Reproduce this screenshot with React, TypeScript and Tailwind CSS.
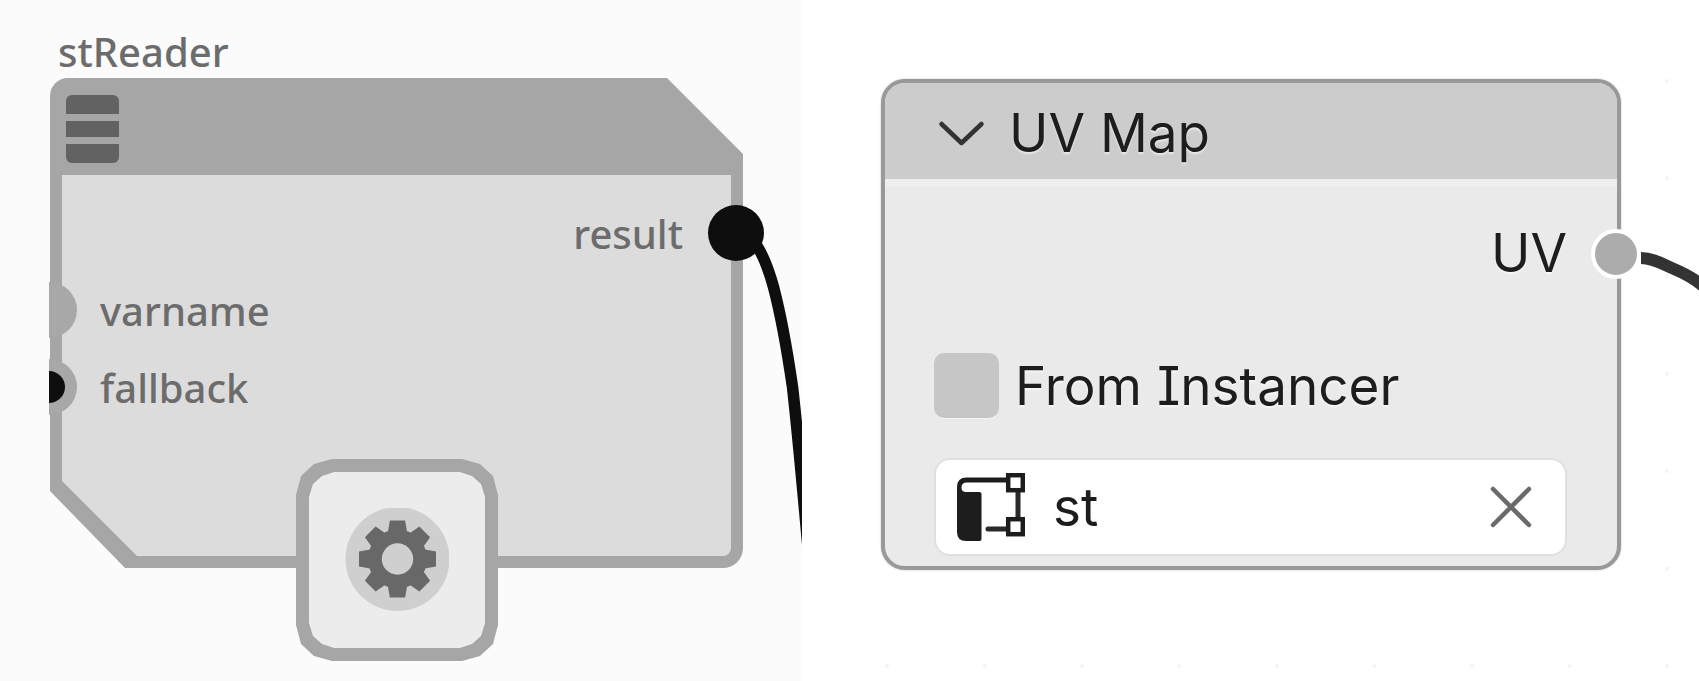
import React, { useState } from "react";

const SETTINGS_TEETH = [0, 45, 90, 135, 180, 225, 270, 315];
const GRID_STEP = 97.5;
const BOTTOM_DOTS = [0, 1, 2, 3, 4, 5, 6, 7, 8];
const SIDE_DOTS = [1, 2, 3, 4, 5, 6];

function GearIcon() {
  return (
    <svg viewBox="-52.500 -51 104 104" className="size-[104px]" aria-hidden="true">
      <circle r="52" fill="#cfcfcf" />
      <g fill="#686868">
        <circle r="29.500" />
        {SETTINGS_TEETH.map((angle) => (
          <path key={angle} d="M-7.6 -38.5H7.6L9.8 -26H-9.8Z" transform={`rotate(${angle})`} />
        ))}
      </g>
      <circle r="15.7" fill="#cfcfcf" />
    </svg>
  );
}

function UvMapIcon() {
  return (
    <svg viewBox="0 0 68 68" className="size-[68px] shrink-0" fill="none" aria-hidden="true">
      <path d="M0 14Q0 4.5 9.5 4.5H49V9.5H10Q4.500 9.500 4.500 14.500Q4.500 19 9 19H22.500Q24.500 19 24.500 21V66Q24.500 68 22.500 68H9Q0 68 0 59Z" fill="#1d1d1d" />
      <path d="M61 17V46M31 56H51" stroke="#2a2a2a" strokeWidth="5" strokeLinecap="round" />
      <rect x="51.200" y="2.200" width="14.600" height="15" fill="#fff" stroke="#1d1d1d" strokeWidth="4.500" />
      <rect x="51.200" y="46.200" width="14.600" height="15" fill="#fff" stroke="#1d1d1d" strokeWidth="4.500" />
    </svg>
  );
}

function ReaderNode() {
  return (
    <article className="relative">
      <div className="ml-px rounded-tl-[18px] rounded-br-[20px] bg-[#a6a6a6] px-3 pb-3 [clip-path:polygon(0_0,calc(100%_-_76px)_0,100%_76px,100%_100%,75px_100%,0_413px)]">
        <header className="flex h-[97px] items-center pt-1">
          <button type="button" aria-label="Node menu" className="ml-1 flex w-[53px] flex-col gap-[7px]">
            <span className="h-[19px] rounded-t-md bg-[#626262]" />
            <span className="h-4 bg-[#626262]" />
            <span className="h-[19px] rounded-b-md bg-[#626262]" />
          </button>
        </header>
        <div className="flex flex-col gap-[29px] rounded-br-lg bg-[#dcdcdc] pt-[35px] pr-12 pb-36 pl-[38px] [clip-path:polygon(0_0,100%_0,100%_100%,75px_100%,0_306px)]">
          <p className="text-right">result</p>
          <p>varname</p>
          <p>fallback</p>
        </div>
      </div>

      <span className="absolute top-[127px] -right-[21px] size-14 rounded-full bg-[#0e0e0e]" />
      <span className="absolute top-[204px] left-0 h-14 w-7 rounded-r-full bg-[#a8a8a8]" />
      <span className="absolute top-[281px] left-0 flex h-14 w-7 items-center rounded-r-full bg-[#a8a8a8]">
        <span className="h-8 w-4 rounded-r-full bg-[#0e0e0e]" />
      </span>

      <button
        type="button"
        aria-label="Node settings"
        className="absolute -bottom-[93px] left-1/2 ml-px -translate-x-1/2 bg-[#a6a6a6] p-[13px] [clip-path:polygon(0_36px,5px_17px,18px_5px,36px_0,calc(100%_-_36px)_0,calc(100%_-_18px)_5px,calc(100%_-_5px)_17px,100%_36px,100%_calc(100%_-_36px),calc(100%_-_5px)_calc(100%_-_17px),calc(100%_-_18px)_calc(100%_-_5px),calc(100%_-_36px)_100%,36px_100%,18px_calc(100%_-_5px),5px_calc(100%_-_17px),0_calc(100%_-_36px))]"
      >
        <span className="flex size-44 items-center justify-center bg-[#ececec] [clip-path:polygon(0_25px,4px_12px,13px_4px,25px_0,calc(100%_-_25px)_0,calc(100%_-_13px)_4px,calc(100%_-_4px)_12px,100%_25px,100%_calc(100%_-_25px),calc(100%_-_4px)_calc(100%_-_12px),calc(100%_-_13px)_calc(100%_-_4px),calc(100%_-_25px)_100%,25px_100%,13px_calc(100%_-_4px),4px_calc(100%_-_12px),0_calc(100%_-_25px))]">
          <GearIcon />
        </span>
      </button>
    </article>
  );
}

function UvMapNode() {
  const [open, setOpen] = useState(true);
  const [instancer, setInstancer] = useState(false);
  const [name, setName] = useState("st");

  return (
    <article className="relative rounded-3xl border-4 border-[#999999] bg-[#eaeaea] shadow-[0_0_2px_#bbbbbb]">
      <header className="flex h-24 items-center gap-[23px] rounded-t-[20px] bg-[#cccccc] pt-1 pl-[53px]">
        <button type="button" aria-label="Collapse node" onClick={() => setOpen(!open)}>
          <svg viewBox="0 0 48 32" className="h-8 w-12" fill="none" aria-hidden="true">
            <path d="M3.500 7L23.500 26L43.500 7" stroke="#333" strokeWidth="4.500" strokeLinecap="round" strokeLinejoin="round" />
          </svg>
        </button>
        <h2 className="[text-shadow:0_2px_2px_#ffffff99]">UV Map</h2>
      </header>
      {open && (
        <div className="rounded-b-[20px] border-t-8 border-[#eeeeee] pt-[34px] pr-[50px] pb-[10px] pl-[49px]">
          <p className="text-right [text-shadow:0_2px_2px_#ffffff99]">UV</p>
          <label className="mt-[68px] flex items-center gap-4 [text-shadow:0_2px_2px_#ffffff99]">
            <input
              type="checkbox"
              checked={instancer}
              onChange={() => setInstancer(!instancer)}
              className="size-[65px] appearance-none rounded-[10px] bg-[#c6c6c6] shadow-[0_1px_1px_#f6f6f6] checked:bg-[#4a4a4a]"
            />
            From Instancer
          </label>
          <div className="mt-10 flex h-[98px] items-center rounded-2xl border-2 border-[#e0e0e0] bg-white pr-8 pl-[21px]">
            <UvMapIcon />
            <input
              aria-label="UV map name"
              value={name}
              onChange={(event) => setName(event.target.value)}
              className="ml-7 h-16 min-w-0 flex-1 bg-transparent outline-none"
            />
            <button type="button" aria-label="Clear" onClick={() => setName("")}>
              <svg viewBox="0 0 44 44" className="size-11" fill="none" aria-hidden="true">
                <path d="M4 4L40 40M40 4L4 40" stroke="#6a6a6a" strokeWidth="4.500" strokeLinecap="round" />
              </svg>
            </button>
          </div>
        </div>
      )}
      <span className="absolute top-[146px] -right-6 size-[50px] rounded-full border-4 border-white bg-[#acacac]" />
    </article>
  );
}

export default function App() {
  return (
    <main className="grid min-h-screen grid-cols-[802fr_897fr] bg-white">
      <section className="relative overflow-hidden bg-[#fbfbfb] pt-7 pr-[59px] pb-5 pl-[49px] font-['Noto_Sans',sans-serif] text-[40px] leading-[48px] font-medium text-[#6c6c6c]">
        <svg viewBox="0 0 80 600" className="absolute top-0 right-0 h-[600px] w-20" fill="none" aria-hidden="true">
          <path d="M23 232Q40 245 51.500 287Q61.500 325 70.500 387Q76 435 88 570" stroke="#0e0e0e" strokeWidth="11.500" />
        </svg>
        <h1 className="mb-[2px] pl-[9px]">stReader</h1>
        <ReaderNode />
      </section>

      <section className="relative overflow-hidden pt-[79px] pr-[78px] pb-20 pl-[79px] font-['Inter',sans-serif] text-[53px] leading-[64px] text-[#1d1d1d] [font-feature-settings:'cv08']">
        <svg viewBox="0 0 897 681" className="absolute top-0 right-0 h-[681px] w-[897px]" fill="#f4f4f4" aria-hidden="true">
          {BOTTOM_DOTS.map((dot) => (
            <circle key={`bottom-${dot}`} cx={865 - dot * GRID_STEP} cy="666" r="2" />
          ))}
          {SIDE_DOTS.map((dot) => (
            <circle key={`side-${dot}`} cx="865" cy={666 - dot * GRID_STEP} r="2" />
          ))}
          <path d="M839 258C852 258 862 265 872 269C884 274 892 278 902 287" fill="none" stroke="#333" strokeWidth="12" />
        </svg>
        <UvMapNode />
      </section>
    </main>
  );
}
